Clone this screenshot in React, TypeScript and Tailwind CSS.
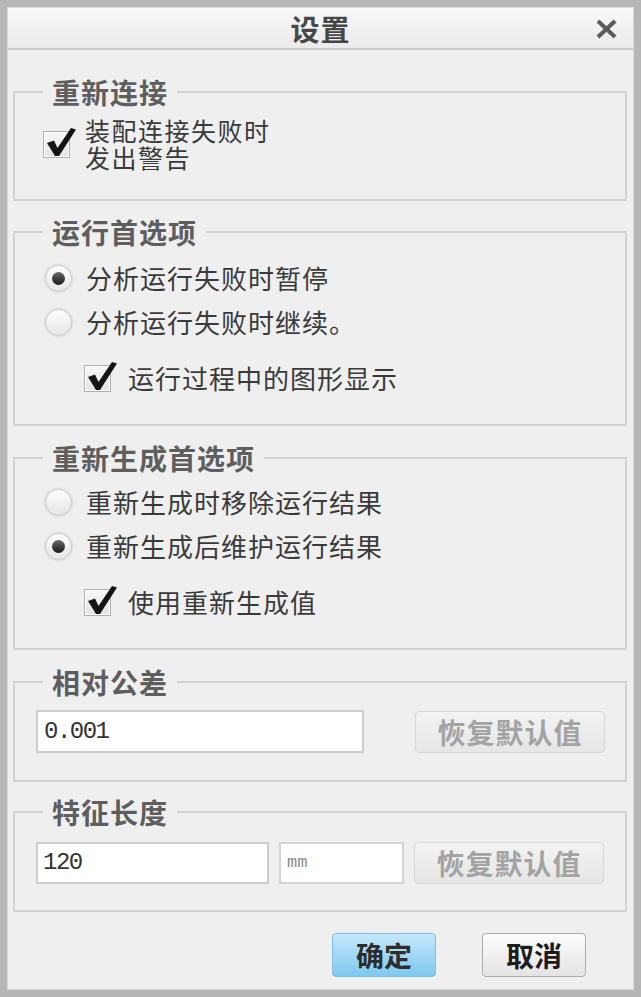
import type { ReactNode } from 'react';

const cjk = '[font-family:"Noto_Sans_CJK_SC","Noto_Sans",sans-serif]';

function GroupBox({ title, className, children }: { title: string; className: string; children: ReactNode }) {
  return (
    <fieldset className={`border-2 border-[#d2d2d3] pl-[21px] pr-[20px] ${className}`}>
      <legend className={`ml-[7px] px-[9px] text-[28px] leading-[30px] font-bold tracking-[1px] text-[#5e5e5e] ${cjk}`}>
        {title}
      </legend>
      {children}
    </fieldset>
  );
}

function CheckBox() {
  return (
    <span className="relative block w-[27px] h-[27px] shrink-0 border border-[#b0b0b0] bg-gradient-to-b from-[#f6f6f6] to-[#e4e4e4] shadow-[inset_0_0_0_1px_#ffffff]">
      <svg className="absolute left-[0px] top-[-8px]" width="34" height="34" viewBox="0 0 34 34">
        <path d="M3 19 L10 16.5 L13.5 24 L27 4 L32 5.5 L15 32 L11 32 Z" fill="#141414" />
      </svg>
    </span>
  );
}

function Radio({ checked }: { checked: boolean }) {
  return (
    <span className="flex items-center justify-center w-[27px] h-[27px] shrink-0 rounded-full border border-[#c9c9c9] bg-gradient-to-b from-[#fdfdfd] to-[#e6e6e6] shadow-[0_0_2px_1px_#dcdcdc]">
      {checked && (
        <span className="block w-[13px] h-[13px] rounded-full bg-gradient-to-b from-[#6a6a6a] to-[#1c1c1c]" />
      )}
    </span>
  );
}

function RadioRow({ checked, label }: { checked: boolean; label: string }) {
  return (
    <div className="flex items-center h-[44px] pl-[9px] gap-[14px]">
      <Radio checked={checked} />
      <span className={`text-[26px] leading-[30px] tracking-[1px] text-[#3a3a3a] ${cjk}`}>{label}</span>
    </div>
  );
}

function CheckRow({ label, className }: { label: string; className: string }) {
  return (
    <div className={`flex items-center h-[44px] pl-[48px] gap-[17px] ${className}`}>
      <CheckBox />
      <span className={`text-[26px] leading-[30px] tracking-[1px] text-[#3a3a3a] ${cjk}`}>{label}</span>
    </div>
  );
}

function DefaultButton() {
  return (
    <button className={`w-[190px] h-[42px] shrink-0 rounded-[4px] border border-[#d6d6d6] bg-gradient-to-b from-[#f3f3f3] to-[#e6e6e6] text-[28px] leading-[30px] font-bold tracking-[1px] text-[#a3a3a3] ${cjk}`}>
      恢复默认值
    </button>
  );
}

export default function App() {
  return (
    <div className="w-[641px] h-[997px] bg-[#b6b6b6] p-[7px]">
      <div className="h-full flex flex-col border border-[#dadada] bg-[#efeff0]">
        {/* Title bar */}
        <div className="relative h-[42px] shrink-0 flex items-center justify-center border-b-2 border-[#cbcbcb] bg-gradient-to-b from-[#f8f8f8] to-[#ebebeb]">
          <span className={`text-[29px] leading-[32px] font-bold tracking-[1px] text-[#474747] ${cjk}`}>设置</span>
          <svg className="absolute right-[16px] top-[11px]" width="21" height="20" viewBox="0 0 21 20">
            <path d="M3.5 3.5 L17.5 16.5 M17.5 3.5 L3.5 16.5" stroke="#5c5c5c" strokeWidth="4.2" strokeLinecap="square" />
          </svg>
        </div>

        <div className="flex-1 flex flex-col pl-[5px] pr-[6px] pt-[27px]">
          <GroupBox title="重新连接" className="pt-[10px] pb-[28px]">
            <div className="flex items-center pl-[7px] gap-[15px]">
              <CheckBox />
              <div className={`flex flex-col text-[25px] tracking-[1.5px] text-[#3a3a3a] ${cjk}`}>
                <span className="leading-[27px]">装配连接失败时</span>
                <span className="leading-[27px]">发出警告</span>
              </div>
            </div>
          </GroupBox>

          <GroupBox title="运行首选项" className="mt-[16px] pt-[9px] pb-[24px]">
            <RadioRow checked label="分析运行失败时暂停" />
            <RadioRow checked={false} label="分析运行失败时继续。" />
            <CheckRow label="运行过程中的图形显示" className="mt-[12px]" />
          </GroupBox>

          <GroupBox title="重新生成首选项" className="mt-[17px] pt-[7px] pb-[24px]">
            <RadioRow checked={false} label="重新生成时移除运行结果" />
            <RadioRow checked label="重新生成后维护运行结果" />
            <CheckRow label="使用重新生成值" className="mt-[12px]" />
          </GroupBox>

          <GroupBox title="相对公差" className="mt-[17px] pt-[13px] pb-[27px]">
            <div className="flex items-center justify-between">
              <div className="w-[328px] h-[43px] flex items-center px-[6px] border-2 border-[#cdcdcd] bg-white text-[24px] tracking-[-1.5px] text-[#333] [font-family:'Liberation_Mono',monospace]">
                0.001
              </div>
              <DefaultButton />
            </div>
          </GroupBox>

          <GroupBox title="特征长度" className="mt-[15px] pt-[15px] pb-[26px]">
            <div className="flex items-center gap-[10px]">
              <div className="w-[233px] h-[42px] flex items-center px-[5px] border-2 border-[#cdcdcd] bg-white text-[24px] tracking-[-1.5px] text-[#333] [font-family:'Liberation_Mono',monospace]">
                120
              </div>
              <div className="w-[125px] h-[42px] flex items-center px-[6px] border-2 border-[#d3d3d3] bg-white text-[17px] text-[#8a8a8a] [font-family:'Liberation_Mono',monospace]">
                mm
              </div>
              <DefaultButton />
            </div>
          </GroupBox>

          <div className="flex justify-end gap-[46px] pr-[41px] mt-[21px]">
            <button className={`w-[104px] h-[44px] rounded-[4px] border border-[#7fbde3] bg-gradient-to-b from-[#c4e8fa] to-[#7ec8f0] text-[28px] leading-[30px] font-bold text-[#2d2d2d] ${cjk}`}>
              确定
            </button>
            <button className={`w-[104px] h-[44px] rounded-[4px] border border-[#ababab] bg-gradient-to-b from-[#fcfcfc] to-[#e4e4e4] text-[28px] leading-[30px] font-bold text-[#1c1c1c] ${cjk}`}>
              取消
            </button>
          </div>
        </div>
      </div>
    </div>
  );
}
